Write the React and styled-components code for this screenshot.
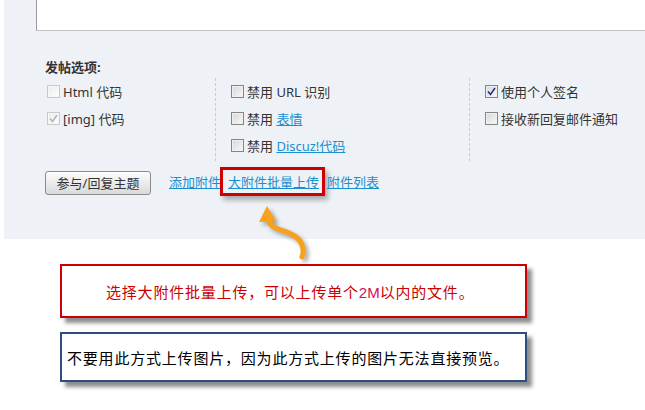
import React from 'react';
import styled, { createGlobalStyle } from 'styled-components';

const GlobalStyle = createGlobalStyle`
    body {
        margin: 0;
        background: #ffffff;
        font-family: "Noto Sans", "Noto Sans CJK SC", sans-serif;
        color: #333333;
    }
`;

const Check = ({ color }) => (
    <svg width="11" height="11" viewBox="0 0 11 11">
        <path d="M2 5.5 L4.5 8.5 L9 2" fill="none" stroke={color} strokeWidth="1.6" />
    </svg>
);

const Option = ({ tone, checked, children }) => (
    <Row>
        <Box $tone={tone}>
            {checked && <Check color={checked === 'blue' ? '#27318a' : '#b4b4b4'} />}
        </Box>
        <span>{children}</span>
    </Row>
);

const App = () => {
    return (
        <Page>
            <GlobalStyle />

            <Panel>
                <Editor />

                <Options>
                    <Title>发帖选项:</Title>

                    <Columns>
                        <Column $width={170} $first>
                            <Option tone="light">Html 代码</Option>
                            <Option tone="light" checked="gray">[img] 代码</Option>
                        </Column>

                        <Column $width={254}>
                            <Option>禁用 URL 识别</Option>
                            <Option>禁用 <Link>表情</Link></Option>
                            <Option>禁用 <Link>Discuz!代码</Link></Option>
                        </Column>

                        <Column>
                            <Option checked="blue">使用个人签名</Option>
                            <Option>接收新回复邮件通知</Option>
                        </Column>
                    </Columns>

                    <Actions>
                        <Button>参与/回复主题</Button>
                        <Link>添加附件</Link>
                        <Highlight>
                            <Link>大附件批量上传</Link>
                        </Highlight>
                        <Link>附件列表</Link>
                    </Actions>
                </Options>
            </Panel>

            <Notes>
                <Callout $color="#cc0000" $height={54} $pad={44}>
                    <RedText>选择大附件批量上传，可以上传单个<Latin>2M</Latin>以内的文件。</RedText>
                </Callout>

                <Callout $color="#2c4f82" $height={50} $pad={5}>
                    不要用此方式上传图片，因为此方式上传的图片无法直接预览。
                </Callout>
            </Notes>

            <Arrow width="70" height="75" viewBox="0 0 70 75">
                <path
                    d="M19 24 C 18 34, 33 34, 43 40 C 52 45, 55 54, 52 62"
                    fill="none"
                    stroke="#f8a11c"
                    strokeWidth="5"
                    strokeLinecap="round"
                />
                <polygon points="17,11 9,27 26,26" fill="#f8a11c" />
            </Arrow>
        </Page>
    );
};

const Page = styled.div`
    position: relative;
    width: 645px;
    height: 410px;
    overflow: hidden;
`;

const Panel = styled.div`
    margin-left: 4px;
    height: 239px;
    background: #eef2f7;
`;

const Editor = styled.div`
    margin-left: 32px;
    height: 30px;
    background: #ffffff;
    border-left: 1px solid #9a9a9a;
    border-bottom: 1px solid #c4c4c4;
`;

const Options = styled.div`
    padding-left: 41px;
    font-size: 13px;
`;

const Title = styled.div`
    margin-top: 27px;
    font-weight: bold;
    line-height: 18px;
    color: #333333;
`;

const Columns = styled.div`
    display: flex;
    margin-top: 2px;
`;

const Column = styled.div`
    display: flex;
    flex-direction: column;
    width: ${(p) => (p.$width ? `${p.$width}px` : 'auto')};
    box-sizing: border-box;
    padding-left: ${(p) => (p.$first ? '2px' : '15px')};
    border-left: ${(p) => (p.$first ? 'none' : '1px dashed #c8cbd0')};
    height: 83px;
`;

const Row = styled.div`
    display: flex;
    align-items: center;
    height: 27px;
    line-height: 18px;
    color: #333333;
`;

const Box = styled.span`
    display: inline-flex;
    align-items: center;
    justify-content: center;
    width: 13px;
    height: 13px;
    box-sizing: border-box;
    margin-right: 3px;
    border: 1px solid ${(p) => (p.$tone === 'light' ? '#c9c9c9' : '#858585')};
    background: ${(p) =>
        p.$tone === 'light'
            ? 'linear-gradient(135deg, #e9e9e9, #ffffff)'
            : 'linear-gradient(135deg, #d6d6d6, #f9f9f9)'};
    box-shadow: inset 0 0 0 1px ${(p) => (p.$tone === 'light' ? '#f6f6f6' : '#f0f0f0')};
`;

const Link = styled.span`
    color: #1a8fcf;
    text-decoration: underline;
    cursor: pointer;
`;

const Actions = styled.div`
    display: flex;
    align-items: center;
    margin-top: 6px;
    height: 29px;
`;

const Button = styled.div`
    display: flex;
    align-items: center;
    justify-content: center;
    width: 106px;
    height: 24px;
    margin-top: 3px;
    margin-right: 18px;
    box-sizing: border-box;
    border: 1px solid #8c8c8c;
    border-radius: 3px;
    background: linear-gradient(#fdfdfd, #d9d9d9);
    color: #333333;
    line-height: 18px;
`;

const Highlight = styled.div`
    display: flex;
    align-items: center;
    height: 29px;
    box-sizing: border-box;
    margin: 0 2px 0 -1px;
    padding: 0 3px 0 5px;
    border: 3px solid #cc0000;
    box-shadow: 3px 4px 5px rgba(0, 0, 0, 0.3);
`;

const Notes = styled.div`
    display: flex;
    flex-direction: column;
    gap: 14px;
    padding: 25px 0 0 60px;
`;

const Callout = styled.div`
    display: flex;
    align-items: center;
    box-sizing: border-box;
    width: 467px;
    height: ${(p) => p.$height}px;
    padding-left: ${(p) => p.$pad}px;
    border: 2px solid ${(p) => p.$color};
    background: #ffffff;
    box-shadow: 5px 5px 4px rgba(0, 0, 0, 0.45);
    font-family: "Noto Sans CJK SC", sans-serif;
    font-size: 15px;
    letter-spacing: 0.8px;
    color: #000000;
`;

const RedText = styled.span`
    color: #cc0000;
`;

const Latin = styled.span`
    font-family: "Liberation Sans", sans-serif;
    color: #d0105a;
    letter-spacing: 0;
`;

const Arrow = styled.svg`
    position: absolute;
    left: 250px;
    top: 195px;
    filter: drop-shadow(3px 3px 2px rgba(0, 0, 0, 0.35));
`;

export default App;
